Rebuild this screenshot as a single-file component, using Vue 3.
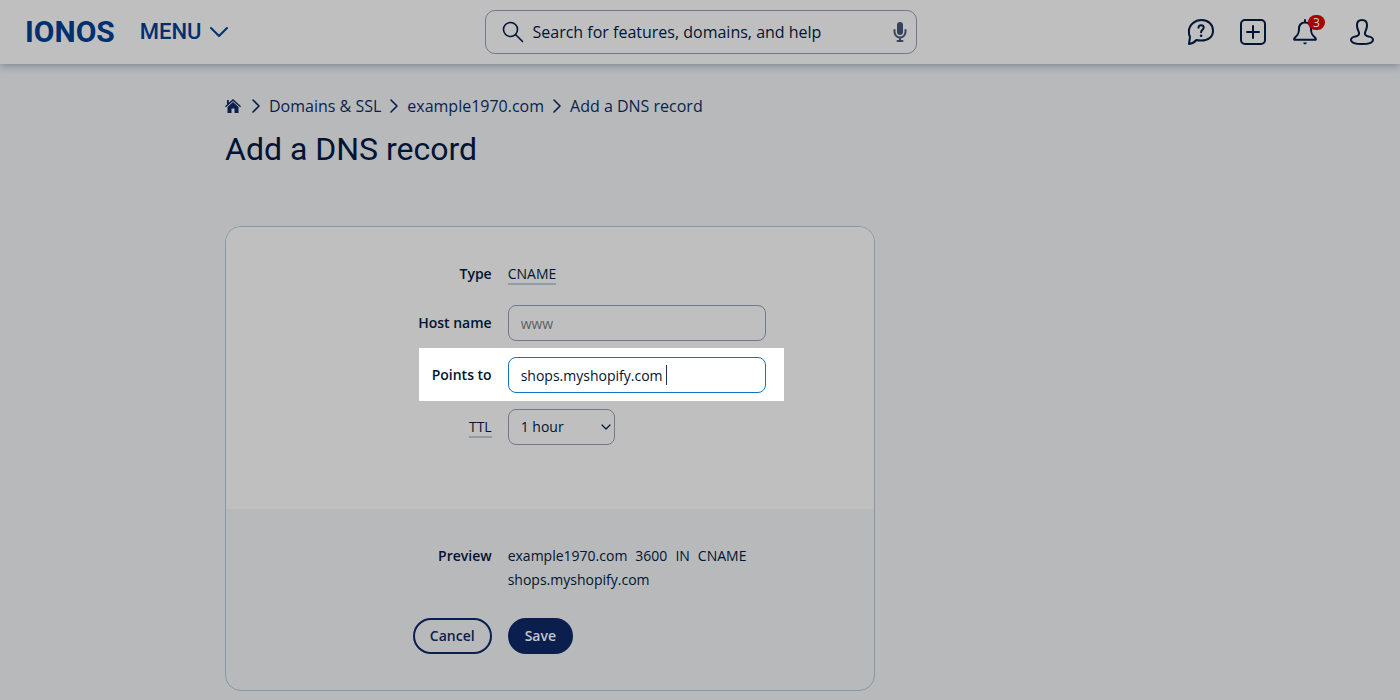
<script setup>
import { ref } from 'vue'

const host = ref('')
const target = ref('shops.myshopify.com')
const ttl = ref('1 hour')
const crumbs = ['Domains & SSL', 'example1970.com', 'Add a DNS record']
</script>

<template>
  <div class="page">
    <header class="topbar">
      <div class="brand">
        <a class="logo" href="#">IONOS</a>
        <button class="menu" type="button">
          MENU
          <svg width="20" height="12" viewBox="0 0 20 12" aria-hidden="true"><path d="M2 2l8 8 8-8" /></svg>
        </button>
      </div>
      <form class="search" role="search" @submit.prevent>
        <svg class="lens" width="22" height="22" viewBox="0 0 22 22" aria-hidden="true">
          <circle cx="8.5" cy="8.5" r="7" /><path d="M13.5 13.5l7 7" />
        </svg>
        <input type="search" aria-label="Search" placeholder="Search for features, domains, and help" />
        <button class="mic" type="button" aria-label="Voice search">
          <svg width="14" height="20" viewBox="0 0 14 20" aria-hidden="true">
            <rect class="fill" x="4" y="0" width="6" height="13" rx="3" />
            <path d="M1.5 8v2a5.5 5.5 0 0 0 11 0V8M7 15.500v3M4.500 19h5" />
          </svg>
        </button>
      </form>
      <nav class="actions" aria-label="Account">
        <button type="button" aria-label="Help">
          <svg width="28" height="28" viewBox="0 0 28 28" aria-hidden="true">
            <path d="M2 26L3 18.800C1.800 17 1.800 15 1.900 13C2.200 6.800 7.800 2 14.500 2S26 6.500 26 12.700S21 22.500 14.500 22.500C12.500 22.500 11 22.500 9.500 22C7.500 24.200 4.500 25.700 2 26Z" />
            <path d="M11.500 9.800c0-1.800 1.200-2.600 2.600-2.600s2.600.9 2.600 2.400c0 2.100-2.600 2.200-2.600 4.600" />
            <circle class="fill" cx="14.100" cy="17.800" r="1.300" />
          </svg>
        </button>
        <button type="button" aria-label="Add">
          <svg width="28" height="28" viewBox="0 0 28 28" aria-hidden="true">
            <rect x="2" y="2" width="24" height="24" rx="4" /><path d="M14 8v12M8 14h12" />
          </svg>
        </button>
        <button class="bell" type="button" aria-label="Notifications, 3 new">
          <svg width="28" height="28" viewBox="0 0 28 28" aria-hidden="true">
            <path d="M14 2V4.500M14 4.500c-4.500 0-6 3-6 6.500 0 5-1.500 6-4 8.500-1 1-1 2-.7 2.200h21.400c.3-.2.300-1.200-.7-2.200-2.500-2.500-4-3.500-4-8.500 0-3.500-1.500-6.500-6-6.500z" />
            <path class="fill" d="M12.200 24.600h3.600a1.800 1.800 0 0 1-3.600 0z" />
          </svg>
          <span class="badge">3</span>
        </button>
        <button class="user" type="button" aria-label="Profile">
          <svg width="28" height="28" viewBox="0 0 28 28" aria-hidden="true">
            <path d="M14 2c-3.300 0-5 1.800-5 5 0 2.800.4 3.600 1 5 .8 1.900 1.400 2.600.9 4.200-.4 1.400-1.800 1.900-3.500 2.200-2.600.6-4.400 1.700-4.400 3.500C3 24.600 8 26 14 26s11-1.400 11-4.100c0-1.800-1.800-2.900-4.400-3.500-1.700-.3-3.100-.8-3.500-2.200-.5-1.600.1-2.300.9-4.200.6-1.400 1-2.200 1-5 0-3.200-1.700-5-5-5z" />
          </svg>
        </button>
      </nav>
    </header>

    <main class="content">
      <nav class="crumbs" aria-label="Breadcrumb">
        <a class="home" href="#" aria-label="Home">
          <svg width="16" height="14" viewBox="0 0 16 14" aria-hidden="true">
            <path d="M8 3L2.500 8v6h4V9.500h3V14h4V8z" />
            <path d="M8 0L3.800 3.800V1H2v4.500L0 7.300l.9 1L8 1.900l7.100 6.400.9-1z" />
          </svg>
        </a>
        <template v-for="c in crumbs" :key="c">
          <svg class="sep" width="10" height="16" viewBox="0 0 10 16" aria-hidden="true"><path d="M2 2l6 6-6 6" /></svg>
          <a href="#">{{ c }}</a>
        </template>
      </nav>
      <h1>Add a DNS record</h1>

      <form class="card" @submit.prevent>
        <div class="fields">
          <div class="row short">
            <span class="label">Type</span>
            <span><a class="hint" href="#">CNAME</a></span>
          </div>
          <div class="row">
            <label class="label" for="host">Host name</label>
            <input id="host" v-model="host" type="text" placeholder="www" />
          </div>
          <div class="row spot">
            <label class="label" for="target">Points to</label>
            <div class="box">
              <input id="target" v-model="target" type="text" />
              <span class="caret"></span>
            </div>
          </div>
          <div class="row">
            <label class="label plain" for="ttl"><span class="hint">TTL</span></label>
            <div class="picker">
              <select id="ttl" v-model="ttl"><option>1 hour</option></select>
              <svg width="10" height="6" viewBox="0 0 10 6" aria-hidden="true"><path d="M1 1l4 4 4-4" /></svg>
            </div>
          </div>
        </div>
        <div class="summary">
          <div class="row">
            <span class="label">Preview</span>
            <p class="preview">
              <span>example1970.com</span><span>3600</span><span>IN</span><span>CNAME</span>
              <span>shops.myshopify.com</span>
            </p>
          </div>
          <div class="row buttons">
            <div class="label"><button class="btn" type="button">Cancel</button></div>
            <div><button class="btn primary" type="submit">Save</button></div>
          </div>
        </div>
      </form>
    </main>
  </div>
</template>

<style>
body {
  background: #b7b9bb;
}
</style>

<style scoped>
.page {
  --navy: #001433;
  --blue: #0a1f4d;
  --line: #6f7b8b;
  min-height: 100vh;
  box-sizing: border-box;
  padding-bottom: 9px;
  background: #b7b9bb;
  color: var(--navy);
  font: 14px/24px "Open Sans", "Noto Sans", sans-serif;
}
.page * {
  box-sizing: border-box;
}
svg {
  display: block;
  flex: none;
  fill: none;
  stroke: currentColor;
  stroke-width: 2;
  stroke-linecap: round;
  stroke-linejoin: round;
}
.fill {
  fill: currentColor;
  stroke: none;
}
a {
  color: inherit;
  text-decoration: none;
}
button,
input,
select {
  margin: 0;
  font: inherit;
  color: inherit;
}
button {
  border: 0;
  padding: 0;
  background: none;
  cursor: pointer;
}
.topbar {
  display: grid;
  grid-template-columns: 1fr minmax(200px, 432px) 1fr;
  align-items: center;
  height: 64px;
  padding: 0 24px 0 25px;
  background: #bfbfbf;
  box-shadow: 0 2px 8px #7f858f;
}
.brand {
  display: flex;
  align-items: center;
  gap: 25px;
  color: #003070;
}
.logo {
  font: 700 30px/40px Roboto, sans-serif;
}
.menu {
  display: flex;
  align-items: center;
  gap: 8px;
  font: 500 22px/24px Roboto, sans-serif;
}
.search {
  display: flex;
  align-items: center;
  height: 44px;
  padding: 0 9px 0 16px;
  border: 1px solid var(--line);
  border-radius: 10px;
}
.lens,
.sep {
  stroke-width: 1.6;
}
.search input {
  flex: 1;
  min-width: 0;
  border: 0;
  padding: 0 9px;
  background: none;
  font-size: 16px;
  outline: 0;
}
.search input::placeholder {
  color: var(--navy);
  opacity: 1;
}
.mic {
  color: #36435c;
}
.actions {
  display: flex;
  justify-content: flex-end;
  gap: 24px;
}
.bell {
  position: relative;
}
.user {
  margin-left: 5px;
}
.badge {
  position: absolute;
  top: -3px;
  right: -6px;
  width: 17px;
  border-radius: 8px;
  background: #a80500;
  color: #d0d0d0;
  font-size: 12px;
  line-height: 15px;
}
.content {
  max-width: 950px;
  margin: 0 auto;
  padding-top: 30px;
}
.crumbs {
  display: flex;
  align-items: center;
  gap: 8px;
  color: var(--blue);
  font-size: 16px;
}
.home {
  margin-right: 2px;
}
.home svg {
  fill: currentColor;
  stroke: none;
}
h1 {
  margin: 10px 0 56px;
  font: 400 32px/42px Roboto, sans-serif;
}
.card {
  max-width: 650px;
  border: 1px solid #8896a5;
  border-radius: 16px;
  overflow: hidden;
}
.fields {
  display: grid;
  gap: 16px;
  padding: 32px 0 64px;
  background: #bfbfbf;
}
.row {
  position: relative;
  display: grid;
  grid-template-columns: 41% 1fr;
  column-gap: 16px;
  align-items: center;
  min-height: 36px;
}
.short {
  min-height: 30px;
}
.label {
  position: relative;
  text-align: right;
  font-weight: 600;
}
.plain {
  font-weight: 400;
}
.hint {
  display: inline-block;
  line-height: 18px;
  border-bottom: 2px solid #949ca3;
}
.row input,
.row select {
  display: block;
  height: 36px;
  padding: 0 12px;
  border: 1px solid var(--line);
  border-radius: 8px;
  background: none;
  outline: 0;
}
.row input {
  width: 258px;
}
.row input::placeholder {
  color: #5f5f5f;
}
.spot::before {
  content: "";
  position: absolute;
  inset: -9px 90px -8px 193px;
  background: #fff;
}
.box {
  position: relative;
  width: 258px;
}
.row .box input {
  border-color: #1474c4;
}
.caret {
  position: absolute;
  left: 158px;
  top: 8px;
  width: 1px;
  height: 20px;
  background: #25345c;
}
.picker {
  position: relative;
  width: 107px;
}
.picker select {
  width: 100%;
  appearance: none;
}
.picker svg {
  position: absolute;
  right: 4px;
  top: 15px;
  stroke-width: 1.2;
  pointer-events: none;
}
.summary {
  padding: 35px 0 36px;
}
.summary .row {
  align-items: start;
}
.preview {
  display: flex;
  flex-wrap: wrap;
  column-gap: 8px;
  width: 258px;
  margin: 0;
}
.buttons {
  margin-top: 26px;
}
.btn {
  display: inline-block;
  height: 36px;
  padding: 0 15px;
  border: 2px solid var(--blue);
  border-radius: 18px;
  color: var(--blue);
  font-weight: 600;
  vertical-align: top;
}
.primary {
  background: var(--blue);
  color: #c6c8cc;
}
</style>
